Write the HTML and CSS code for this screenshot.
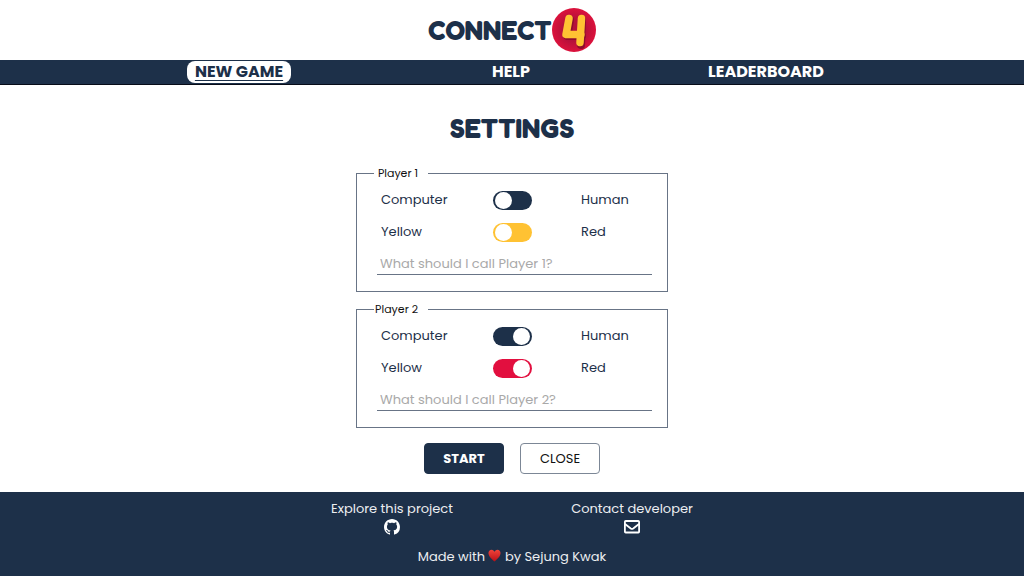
FILE: index.html
```html
<!DOCTYPE html>
<html lang="en">
<head>
<meta charset="utf-8">
<meta name="viewport" content="width=device-width, initial-scale=1">
<title>Connect 4</title>
<link rel="stylesheet" href="styles.css">
</head>
<body>
<header class="header">
  <span class="wordmark">CONNECT</span>
  <svg class="badge" viewBox="0 0 44 44" role="img" aria-label="4">
    <defs><radialGradient id="disc"><stop offset="0.5" stop-color="#b5103a"/><stop offset="1" stop-color="#dc123c"/></radialGradient></defs>
    <circle cx="22" cy="22" r="22" fill="url(#disc)"/>
    <g fill="none" stroke-linecap="round" stroke-linejoin="round">
      <path d="M17 11L14.500 27H29M29 11L28 36" stroke="#8f0c2e" stroke-width="8" transform="translate(1 1)"/>
      <path d="M17 10.500L14 26.500H29M29.500 10.500L28 34.500" stroke="#ffc233" stroke-width="7.500"/>
    </g>
  </svg>
</header>
<nav class="nav">
  <a class="nav-link active" href="#new">NEW GAME</a>
  <a class="nav-link" href="#help">HELP</a>
  <a class="nav-link" href="#leaderboard">LEADERBOARD</a>
</nav>
<main class="main">
  <h1 class="title">SETTINGS</h1>
  <form class="form">
    <fieldset class="player">
      <legend class="legend">Player 1</legend>
      <div class="row"><label for="type1">Computer</label><input class="toggle" type="checkbox" id="type1"><label for="type1">Human</label></div>
      <div class="row"><label for="color1">Yellow</label><input class="toggle color" type="checkbox" id="color1"><label for="color1">Red</label></div>
      <input class="name" type="text" aria-label="Player 1 name" placeholder="What should I call Player 1?">
    </fieldset>
    <fieldset class="player">
      <legend class="legend">Player 2</legend>
      <div class="row"><label for="type2">Computer</label><input class="toggle" type="checkbox" id="type2" checked><label for="type2">Human</label></div>
      <div class="row"><label for="color2">Yellow</label><input class="toggle color" type="checkbox" id="color2" checked><label for="color2">Red</label></div>
      <input class="name" type="text" aria-label="Player 2 name" placeholder="What should I call Player 2?">
    </fieldset>
    <div class="actions">
      <button class="button primary" type="submit">START</button>
      <button class="button" type="button">CLOSE</button>
    </div>
  </form>
</main>
<footer class="footer">
  <div class="links">
    <a class="footer-link" href="#project">Explore this project
      <svg class="icon" viewBox="0 0 16 16" fill="currentColor" aria-hidden="true"><path d="M8 0C3.580 0 0 3.580 0 8c0 3.540 2.290 6.530 5.470 7.590.4.070.55-.17.55-.38 0-.19-.01-.82-.01-1.490-2.010.37-2.530-.49-2.690-.94-.09-.23-.48-.94-.82-1.130-.28-.15-.68-.52-.01-.53.63-.01 1.080.58 1.230.82.72 1.210 1.870.87 2.330.66.070-.52.28-.87.51-1.070-1.780-.2-3.640-.89-3.640-3.950 0-.87.31-1.590.82-2.150-.08-.2-.36-1.020.080-2.120 0 0 .67-.21 2.200.82.64-.18 1.320-.27 2-.27s1.360.09 2 .27c1.530-1.040 2.200-.82 2.200-.82.44 1.100.16 1.920.08 2.120.51.56.82 1.270.82 2.150 0 3.070-1.870 3.750-3.650 3.950.29.25.54.73.54 1.480 0 1.070-.01 1.930-.01 2.200 0 .21.15.46.55.38A8.010 8.010 0 0 0 16 8c0-4.420-3.580-8-8-8z"/></svg>
    </a>
    <a class="footer-link" href="#contact">Contact developer
      <svg class="icon" viewBox="0 0 16 16" fill="none" stroke="currentColor" stroke-width="1.800" stroke-linejoin="round" aria-hidden="true"><rect x="0.900" y="2" width="14.200" height="11.500" rx="0.800"/><path d="M1 5L6.800 9.500Q8 10.300 9.200 9.500L15 5"/></svg>
    </a>
  </div>
  <p class="credit">Made with <svg class="heart" viewBox="0 0 14 14" role="img" aria-label="love"><defs><linearGradient id="red" x2="0" y2="1"><stop stop-color="#f0443a"/><stop offset="1" stop-color="#b80f16"/></linearGradient></defs><path fill="url(#red)" d="M7 13.500C4.500 11 .5 8.200.5 4.300.5 2.200 2 .8 3.800.8 5.300.8 6.500 1.800 7 3.200 7.500 1.800 8.700.8 10.200.8c1.800 0 3.300 1.400 3.300 3.500C13.500 8.200 9.500 11 7 13.500z"/></svg> by Sejung Kwak</p>
</footer>
</body>
</html>
```
FILE: styles.css
```css
* { box-sizing: border-box; }

body {
  margin: 0;
  min-height: 100vh;
  display: flex;
  flex-direction: column;
  background: #fff;
  color: #1d3049;
  font: 13px/20px Poppins, Inter, sans-serif;
}

a { color: inherit; text-decoration: none; }

.header {
  height: 60px;
  display: flex;
  align-items: center;
  justify-content: center;
}

.wordmark, .title {
  font-family: "Fredoka One", Fredoka, Poppins, Inter, sans-serif;
  font-size: 27px;
  line-height: 32px;
  font-weight: 700;
  color: #1d3049;
}

.badge { width: 44px; height: 44px; }

.nav {
  display: grid;
  grid-template-columns: 478fr 66fr 444fr 36fr;
  align-items: center;
  justify-items: center;
  height: 25px;
  background: #1d3049;
  border-bottom: 1px solid #080c18;
  color: #fff;
  font-size: 16px;
  font-weight: 700;
}

.nav-link { padding: 0 8px; line-height: 22px; }

.active {
  background: #fff;
  color: #1d3049;
  border-radius: 8px;
  text-decoration: underline;
  text-decoration-thickness: 1px;
  text-underline-offset: 3px;
}

.main {
  flex: 1;
  display: flex;
  flex-direction: column;
  align-items: center;
}

.title { margin: 27px 0 20px; }

.form {
  width: 312px;
  max-width: 100%;
  display: flex;
  flex-direction: column;
  gap: 8px;
}

.player {
  min-width: 0;
  margin: 0;
  padding: 2px 15px 16px 20px;
  border: 1px solid #687486;
}

.legend {
  display: flex;
  justify-content: flex-end;
  width: 54px;
  margin-left: -3px;
  padding: 0 10px 0 0;
  color: #111;
  font-size: 11px;
  line-height: 18px;
}

.row {
  display: grid;
  grid-template-columns: 112px 88px 1fr;
  align-items: center;
  height: 32px;
  padding-left: 4px;
}

.toggle {
  appearance: none;
  width: 39px;
  height: 19px;
  margin: 1px 0 0;
  padding: 1px 2px;
  display: flex;
  align-items: center;
  border-radius: 10px;
  background: #1d3049;
}

.toggle::before {
  content: "";
  width: 17px;
  height: 17px;
  border-radius: 50%;
  background: #fff;
}

.toggle:checked { justify-content: flex-end; }
.color { background: #ffc233; }
.color:checked { background: #e20f3f; }

.name {
  display: block;
  width: 100%;
  height: 27px;
  padding: 5px 3px 0;
  border: 0;
  border-bottom: 1px solid #687486;
  background: none;
  color: #1d3049;
  font: inherit;
}

.name::placeholder { color: #a9a9a9; }

.actions {
  display: flex;
  justify-content: center;
  gap: 16px;
  padding: 7px 0 18px;
}

.button {
  width: 80px;
  height: 31px;
  padding: 0;
  border: 1px solid #7c8796;
  border-radius: 4px;
  background: #fff;
  color: #111;
  font: inherit;
}

.primary {
  border-color: #1d3049;
  background: #1d3049;
  color: #fff;
  font-weight: 700;
}

.footer {
  padding: 7px 0 9px;
  background: #1d3049;
  color: #eceef1;
}

.links {
  display: grid;
  grid-template-columns: 240px 240px;
  justify-content: center;
}

.footer-link {
  display: flex;
  flex-direction: column;
  align-items: center;
}

.icon { width: 16px; height: 16px; color: #fff; }
.credit { margin: 12px 0 0; text-align: center; }
.heart { width: 13px; height: 13px; vertical-align: -1px; }
```
